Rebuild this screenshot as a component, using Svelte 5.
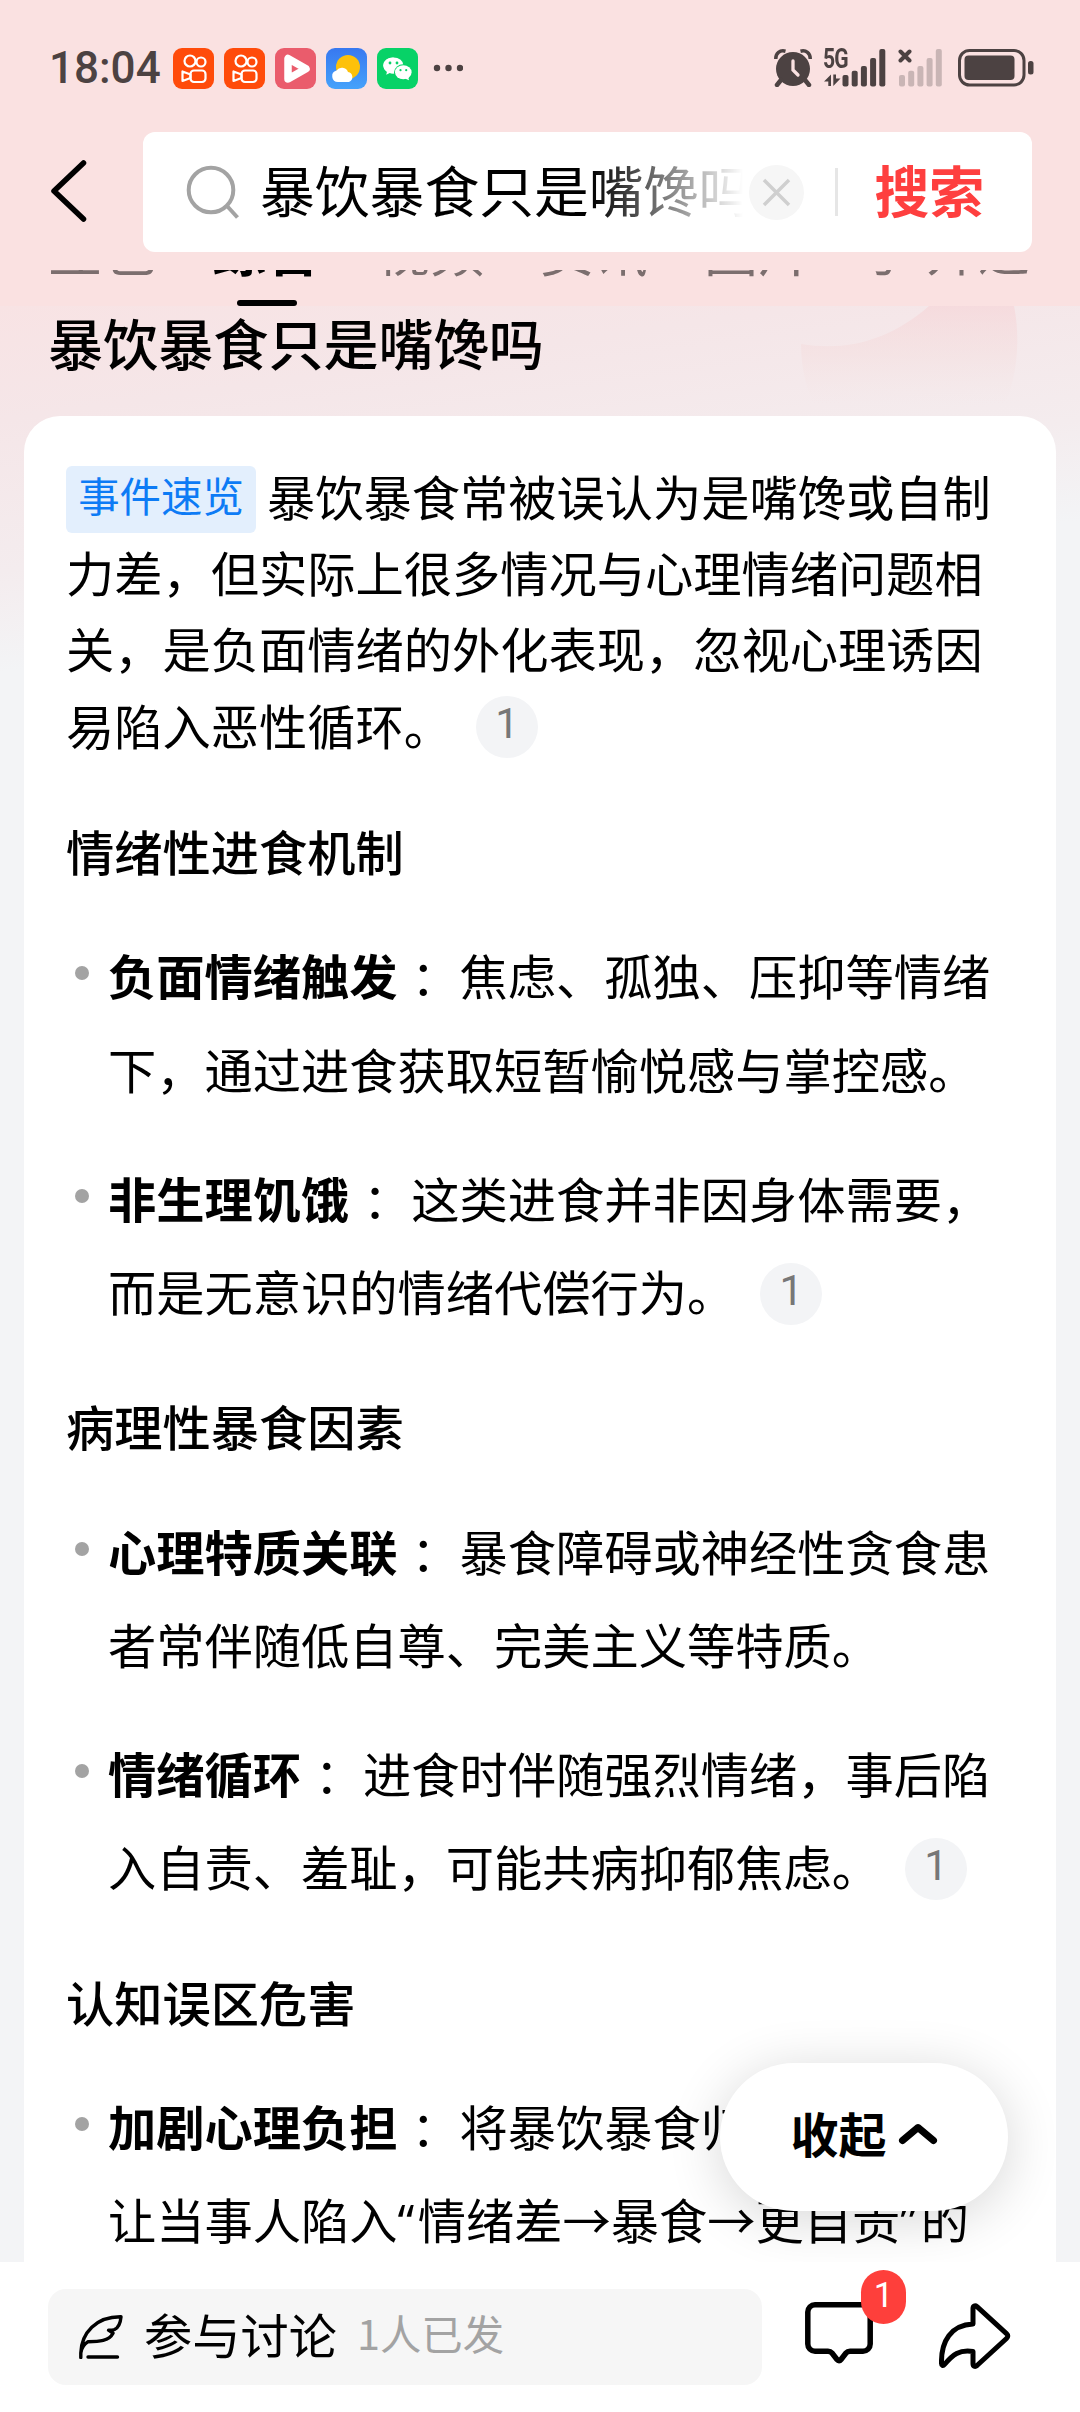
<script>
  const query = '暴饮暴食只是嘴馋吗';

  let tabs = ['豆包', '综合', '视频', '资讯', '图片', '马 开道'];
  let activeTab = '综合';

  let signalTops = [26, 21.7, 17, 9, 0];

  let sections = [
    {
      title: '情绪性进食机制',
      items: [
        { label: '负面情绪触发', text: '焦虑、孤独、压抑等情绪下，通过进食获取短暂愉悦感与掌控感。' },
        { label: '非生理饥饿', text: '这类进食并非因身体需要，而是无意识的情绪代偿行为。', cite: 1 }
      ]
    },
    {
      title: '病理性暴食因素',
      items: [
        { label: '心理特质关联', text: '暴食障碍或神经性贪食患者常伴随低自尊、完美主义等特质。' },
        { label: '情绪循环', text: '进食时伴随强烈情绪，事后陷入自责、羞耻，可能共病抑郁焦虑。', cite: 1 }
      ]
    },
    {
      title: '认知误区危害',
      items: [
        { label: '加剧心理负担', text: '将暴饮暴食归咎于自控，让当事人陷入“情绪差→暴食→更自责”的' }
      ]
    }
  ];

  // curly quotes are set in a latin face so they stay narrow
  function splitQuotes(text) {
    return text.split(/([“”])/);
  }
</script>

<main>
  <header>
    <div class="status-bar">
      <span class="time">18:04</span>
      <div class="apps">
        {#each [0, 1] as n (n)}
          <svg viewBox="0 0 41 41">
            <rect width="41" height="41" rx="9" fill="#ff4b0a" />
            <g fill="none" stroke="#fff" stroke-width="2.2">
              <circle cx="17" cy="13" r="5.5" />
              <circle cx="28" cy="14" r="4.500" />
              <rect x="17.500" y="22.500" width="15" height="11.500" rx="3.500" />
              <path d="M9.500 23.500v9.500l8-3v-3.500z" stroke-linejoin="round" />
            </g>
          </svg>
        {/each}
        <svg viewBox="0 0 41 41">
          <rect width="41" height="41" rx="9" fill="#ea5c6c" />
          <path d="M13 10.500v20.500L31 20.800z" fill="none" stroke="#fff" stroke-width="7.500" stroke-linejoin="round" />
        </svg>
        <svg viewBox="0 0 41 41">
          <defs>
            <linearGradient id="sky" x1="0" y1="0" x2="0" y2="1">
              <stop offset="0" stop-color="#3878f0" />
              <stop offset="1" stop-color="#45a2fb" />
            </linearGradient>
          </defs>
          <rect width="41" height="41" rx="9" fill="url(#sky)" />
          <circle cx="22" cy="19" r="12" fill="#fdc10a" />
          <path d="M12 34a5.800 5.800 0 0 1-1.500-11.400 6.500 6.500 0 0 1 11.500 1.400 5.200 5.200 0 0 1 1 10z" fill="#fff" />
        </svg>
        <svg viewBox="0 0 41 41">
          <rect width="41" height="41" rx="9" fill="#07d267" />
          <path d="M16.500 9.500c-5.800 0-10.300 3.500-10.300 8 0 2.500 1.500 4.700 3.800 6.200l-.8 3 3.600-1.800c1.400.4 2.500.5 4 .5z" fill="#fff" />
          <ellipse cx="16.500" cy="17.500" rx="10" ry="8" fill="#fff" />
          <ellipse cx="26.300" cy="24.300" rx="9.300" ry="8" fill="#07d267" />
          <ellipse cx="26.300" cy="24.300" rx="8.300" ry="7" fill="#fff" />
          <path d="M28 30.500l4 1.700-.8-3.200z" fill="#fff" />
          <circle cx="13" cy="15" r="1.400" fill="#07d267" />
          <circle cx="20" cy="15" r="1.400" fill="#07d267" />
          <circle cx="23.500" cy="22.200" r="1.100" fill="#07d267" />
          <circle cx="29.200" cy="22.200" r="1.100" fill="#07d267" />
        </svg>
      </div>
      <svg class="dots" viewBox="0 0 30 8">
        <circle cx="4" cy="4" r="3.200" />
        <circle cx="15.500" cy="4" r="3.200" />
        <circle cx="27" cy="4" r="3.200" />
      </svg>

      <svg class="alarm" viewBox="0 0 38 38">
        <circle cx="19" cy="20" r="17" />
        <path d="M7 31l-4 5M31 31l4 5" stroke="#4c4242" stroke-width="4.500" stroke-linecap="round" />
        <path d="M1.800 10C1.500 4 6 .8 11.500 2.200M36.200 10C36.500 4 32 .8 26.500 2.200" fill="none" stroke="#4c4242" stroke-width="3.500" />
        <path d="M19 12v9l5 5" fill="none" stroke="#fae1e1" stroke-width="3.300" stroke-linecap="round" />
      </svg>
      <div class="mobile">
        <span class="net">5G</span>
        <svg viewBox="0 0 62 38">
          <path d="M0 32.500l7-7v11.500H4.300v-4.500zM9.300 25.500H12v4h4.500l-7.200 7.500z" />
          {#each signalTops as top, i}
            <rect x={18.5 + i * 9.2} y={top} width="6" height={37.5 - top} rx="2" />
          {/each}
        </svg>
      </div>
      <svg class="nosim" viewBox="0 0 44 38">
        {#each signalTops as top, i}
          <rect x={1 + i * 9.2} y={top} width="6" height={37.5 - top} rx="2" fill="#c9b5b5" />
        {/each}
        <path d="M2.500 2.500l9 9M11.500 2.500l-9 9" stroke="#4c4242" stroke-width="4" stroke-linecap="round" />
      </svg>
      <svg class="battery" viewBox="0 0 76 38">
        <rect x="1.500" y="1.500" width="64.500" height="34.500" rx="10" fill="none" stroke="#4c4242" stroke-width="3" />
        <rect x="6.500" y="6.500" width="50" height="24.500" rx="4" />
        <rect x="70" y="12" width="5.500" height="13.500" rx="2.500" />
      </svg>
    </div>

    <div class="search-row">
      <svg class="back" viewBox="0 0 38 64">
        <path d="M33.500 4L4 32l29.500 28" fill="none" stroke="#000" stroke-width="5.500" stroke-linecap="round" stroke-linejoin="round" />
      </svg>
      <div class="search-box">
        <svg class="magnifier" viewBox="0 0 54 54">
          <circle cx="25" cy="25" r="22.300" />
          <path d="M41.500 41.500l10 11" />
        </svg>
        <div class="query">{query}</div>
        <svg class="clear" viewBox="0 0 55 55">
          <circle cx="27.500" cy="27.500" r="27.500" fill="#f6f6f6" />
          <path d="M15 15l25 25M40 15L15 40" stroke="#cfcfcf" stroke-width="3.500" />
        </svg>
        <div class="divider"></div>
        <div class="submit">搜索</div>
      </div>
    </div>

    <nav>
      {#each tabs as tab}
        <div class="tab" class:active={tab === activeTab}><span>{tab}</span></div>
      {/each}
    </nav>
  </header>

  <section class="content">
    <svg class="decor" viewBox="0 0 220 110">
      <defs>
        <linearGradient id="petal" x1="0" y1="0" x2="0" y2="1">
          <stop offset="0" stop-color="#f6d3d6" stop-opacity=".6" />
          <stop offset=".45" stop-color="#f5dcdc" stop-opacity=".4" />
          <stop offset=".9" stop-color="#f5e4e4" stop-opacity="0" />
        </linearGradient>
      </defs>
      <path d="M1 38C45 45 88 36 129 0h85c8 40 1 80-14 110H20C8 90 1 65 1 38z" fill="url(#petal)" />
    </svg>
    <h1>{query}</h1>

    <article>
      <p class="intro"><span class="tag">事件速览</span>暴饮暴食常被误认为是嘴馋或自制力差，但实际上很多情况与心理情绪问题相关，是负面情绪的外化表现，忽视心理诱因易陷入恶性循环。<span class="cite">1</span></p>

      {#each sections as section}
        <h2>{section.title}</h2>
        <ul>
          {#each section.items as item}
            <li>
              <b>{item.label}</b> ：{#each splitQuotes(item.text) as part}{#if part === '“' || part === '”'}<span class="quote">{part}</span>{:else}{part}{/if}{/each}{#if item.cite}<span class="cite">{item.cite}</span>{/if}
            </li>
          {/each}
        </ul>
      {/each}
    </article>

    <button class="collapse">
      收起
      <svg viewBox="0 0 40 22">
        <path d="M4.500 17.500L20 4.500l15.500 13" fill="none" stroke="#000" stroke-width="7" stroke-linecap="round" stroke-linejoin="round" />
      </svg>
    </button>
  </section>

  <footer>
    <div class="reply">
      <svg class="feather" viewBox="0 0 44 44">
        <path d="M1.800 42.500V38C2.500 18 17 1.500 42 1.800c-.5 5.500-3 11-6.500 12.700-1.800.8-4 .7-6 .7l4.500 3c-4 8-14 8.500-25 8.500C5.500 29 2.500 33 1.800 38M9 42h29.500" />
      </svg>
      <span class="join">参与讨论</span>
      <span class="count">1人已发</span>
    </div>
    <div class="comment">
      <svg viewBox="0 0 68 62">
        <path d="M10 2.800h48a7.200 7.200 0 0 1 7.200 7.200v32a7.200 7.200 0 0 1-7.200 7.200H45c-2 0-3 .6-4 1.800l-5 6.500c-1.200 1.500-2.800 1.500-4 0L27 51c-1-1.200-2-1.800-4-1.800H10A7.200 7.200 0 0 1 2.800 42V10A7.200 7.200 0 0 1 10 2.800z" />
      </svg>
      <span class="badge">1</span>
    </div>
    <svg class="share" viewBox="0 0 72 66">
      <path d="M34 21V5.500c0-2.500 2-3.500 4-1.800l29.500 27c1.700 1.600 1.700 3.200 0 4.800L38 62.500c-2 1.700-4 .7-4-1.800V48.500c-14-2-20 3-28.500 13-1.500 1.800-3 1-3-1C2 38 12 22 34 21z" />
    </svg>
  </footer>
</main>

<style>
  :global(body) {
    margin: 0;
    background: #ffffff;
  }

  main {
    width: 1080px;
    height: 2412px;
    display: flex;
    flex-direction: column;
    overflow: hidden;
    font-family: 'Noto Sans CJK SC', sans-serif;
    color: #000000;
  }

  svg {
    display: block;
    flex: none;
  }

  header {
    height: 306px;
    flex: none;
    background: #fae1e1;
  }

  .status-bar {
    height: 132px;
    box-sizing: border-box;
    padding: 48px 46px 0 49px;
    display: flex;
    align-items: flex-start;
    fill: #4c4242;
    color: #4c4242;
  }

  .time {
    width: 124px;
    font: 500 44px/41px Roboto, sans-serif;
  }

  .apps {
    display: flex;
    gap: 10px;
  }

  .apps svg {
    width: 41px;
    height: 41px;
  }

  .dots {
    width: 30px;
    height: 8px;
    margin: 16px auto 0 15px;
  }

  .alarm {
    width: 38px;
    height: 38px;
    margin-top: 1px;
  }

  .mobile {
    position: relative;
    margin: 1px 0 0 12px;
  }

  .mobile svg {
    width: 62px;
    height: 38px;
  }

  .net {
    position: absolute;
    left: -1px;
    top: -2px;
    font: 700 27px/24px Roboto, sans-serif;
    letter-spacing: -1px;
    transform: scaleX(0.78);
    transform-origin: left;
  }

  .nosim {
    width: 44px;
    height: 38px;
    margin: 1px 0 0 12px;
  }

  .battery {
    width: 76px;
    height: 38px;
    margin: 1px 0 0 16px;
  }

  .search-row {
    height: 120px;
    display: flex;
    align-items: center;
    padding: 0 48px 0 50px;
  }

  .back {
    width: 38px;
    height: 64px;
    margin: 0 55px 2px 0;
  }

  .search-box {
    flex: 1;
    height: 120px;
    border-radius: 12px;
    background: #ffffff;
    display: flex;
    align-items: center;
    padding: 0 48px 0 43px;
  }

  .magnifier {
    width: 54px;
    height: 54px;
    margin-right: 20px;
    fill: none;
    stroke: #a3a3a3;
    stroke-width: 4;
  }

  .query {
    width: 484px;
    margin-bottom: 9px;
    font-size: 54.8px;
    line-height: 80px;
    white-space: nowrap;
    overflow: hidden;
    mask-image: linear-gradient(to right, #000 330px, transparent 483px);
  }

  .clear {
    width: 55px;
    height: 55px;
    margin-left: 5px;
  }

  .divider {
    width: 3px;
    height: 48px;
    margin: 0 auto 0 31px;
    background: #e6e6e6;
  }

  .submit {
    margin-bottom: 8px;
    font-size: 54.8px;
    line-height: 80px;
    font-weight: 700;
    color: #fe3f3f;
  }

  nav {
    height: 36px;
    margin-top: 18px;
    display: flex;
    gap: 56px;
    padding-left: 48px;
    overflow: hidden;
  }

  .tab {
    position: relative;
    flex: none;
    height: 36px;
    font-size: 54px;
    line-height: 54px;
    color: #7b6e6e;
  }

  .tab span {
    display: block;
    margin-top: -48px;
  }

  .tab:last-child {
    margin-left: -22px;
    font-size: 52px;
    word-spacing: 16px;
  }

  .tab.active {
    font-weight: 700;
    color: #000000;
  }

  .tab.active::after {
    content: '';
    position: absolute;
    left: 25px;
    bottom: 0;
    width: 60px;
    height: 6px;
    border-radius: 3px;
    background: #000000;
  }

  .content {
    position: relative;
    flex: 1;
    min-height: 0;
    overflow: hidden;
    background: linear-gradient(172deg, #f8e3e4 0, #f5e6e8 113px, #f4ecee 263px, #f3f4f6 363px);
  }

  .decor {
    position: absolute;
    left: 800px;
    top: 0;
    width: 220px;
    height: 110px;
  }

  h1 {
    position: relative;
    margin: 0;
    padding: 0 48px;
    height: 110px;
    font-size: 55.1px;
    line-height: 70px;
    font-weight: 500;
  }

  article {
    height: 1900px;
    margin: 0 24px;
    padding: 41px 42px 0;
    border-radius: 36px 36px 0 0;
    background: #ffffff;
    font-size: 48.25px;
  }

  .intro {
    margin: 0;
    line-height: 76.2px;
  }

  .tag {
    display: inline-block;
    vertical-align: top;
    box-sizing: border-box;
    width: 190px;
    height: 67px;
    margin: 9px 11px 0 0;
    border-radius: 6px;
    background: #e3effd;
    color: #0d7bf5;
    font-size: 41.4px;
    line-height: 56px;
    text-align: center;
  }

  .cite {
    display: inline-block;
    vertical-align: top;
    width: 62px;
    height: 62px;
    margin: 10px 0 0 24px;
    border-radius: 50%;
    background: #f3f4f6;
    color: #777777;
    font: 400 42px/56px Roboto, sans-serif;
    text-align: center;
  }

  h2 {
    margin: 54px 0 44.5px;
    font-size: 48.25px;
    line-height: 68px;
    font-weight: 500;
  }

  ul {
    margin: 0;
    padding: 0;
    list-style: none;
    display: flex;
    flex-direction: column;
    gap: 35.7px;
  }

  li {
    position: relative;
    padding-left: 42px;
    line-height: 93.3px;
    word-spacing: 3px;
  }

  li::before {
    content: '';
    position: absolute;
    left: 9px;
    top: 38px;
    width: 14px;
    height: 14px;
    border-radius: 50%;
    background: #a3a3a3;
  }

  li .cite {
    margin: 19px 0 0 25px;
  }

  .quote {
    font-family: 'Open Sans', sans-serif;
    letter-spacing: 3.5px;
  }

  .collapse {
    position: absolute;
    right: 72px;
    bottom: 51px;
    width: 288px;
    height: 148px;
    padding: 0 0 10px;
    border: none;
    border-radius: 74px;
    background: #ffffff;
    box-shadow: 0 8px 54px rgba(0, 0, 0, 0.16);
    display: flex;
    align-items: center;
    justify-content: center;
    gap: 11px;
    font: 700 48px/60px 'Noto Sans CJK SC', sans-serif;
    color: #000000;
  }

  .collapse svg {
    width: 40px;
    height: 22px;
    margin-top: 4px;
  }

  footer {
    height: 150px;
    flex: none;
    box-sizing: border-box;
    padding: 27px 69px 27px 48px;
    background: #ffffff;
    display: flex;
    align-items: center;
  }

  .reply {
    width: 714px;
    height: 96px;
    border-radius: 18px;
    background: #f6f6f6;
    box-sizing: border-box;
    padding: 0 31px;
    display: flex;
    align-items: center;
  }

  .feather {
    width: 44px;
    height: 44px;
    fill: none;
    stroke: #000000;
    stroke-width: 3.4;
    stroke-linecap: round;
    stroke-linejoin: round;
  }

  .join {
    margin: 0 0 9px 21px;
    font-size: 48.25px;
    line-height: 80px;
  }

  .count {
    margin: 0 0 11px 20px;
    font-size: 41.4px;
    line-height: 80px;
    color: #a3a3a3;
  }

  .comment {
    position: relative;
    margin-left: 43px;
    height: 70px;
  }

  .comment svg {
    width: 68px;
    height: 62px;
    fill: none;
    stroke: #000000;
    stroke-width: 5.5;
  }

  .badge {
    position: absolute;
    left: 56px;
    top: -32px;
    width: 45px;
    height: 54px;
    border-radius: 22.5px;
    background: #fe3f3b;
    color: #ffffff;
    font: 400 35px/51px Roboto, sans-serif;
    text-align: center;
  }

  .share {
    width: 72px;
    height: 66px;
    margin: 0 0 2px auto;
    fill: none;
    stroke: #000000;
    stroke-width: 5;
    stroke-linejoin: round;
  }
</style>
